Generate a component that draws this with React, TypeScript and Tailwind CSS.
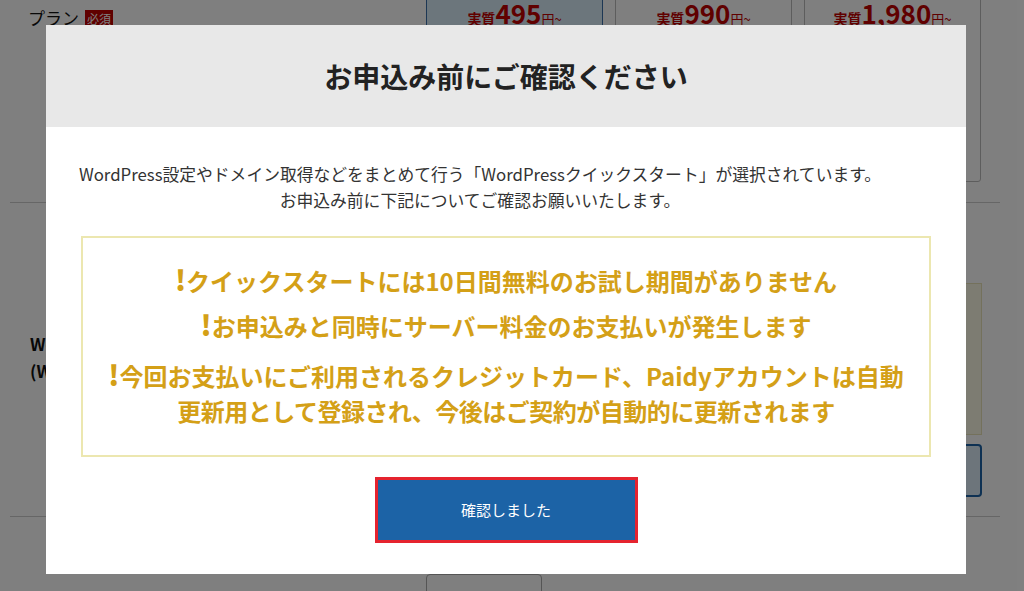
import React from "react";

const jp = { fontFamily: '"Noto Sans CJK JP", "Noto Sans", sans-serif' };

function PriceCard({ price, selected }: { price: string; selected?: boolean }) {
  return (
    <div
      className={`w-[177px] h-[206px] -mt-[24px] rounded-b-[3px] border flex flex-col items-center pt-[4px] ${
        selected ? "bg-[#d8ecf8] border-[#3a6fa8]" : "bg-white border-[#bbbbbb]"
      }`}
    >
      <div className="text-[13px] leading-[16px] text-[#c00000] font-bold tracking-[2px]">キャンペーン中</div>
      <div className="flex items-baseline mt-[2px] text-[#c00000] font-bold">
        <span className="text-[14px]">実質</span>
        <span className="text-[26px] leading-[28px]">{price}</span>
        <span className="text-[13px] font-normal">円~</span>
      </div>
    </div>
  );
}

export default function App() {
  return (
    <div className="relative w-[1024px] h-[591px] overflow-hidden bg-white text-[#333]" style={jp}>
      {/* underlying page */}
      <div className="flex flex-col">
        <div className="flex h-[202px]">
          <div className="w-[426px] pl-[28px] pt-[7px] flex items-start gap-[6px]">
            <span className="text-[17px] leading-[22px] text-[#111]">プラン</span>
            <span className="bg-[#c00000] text-white text-[12px] leading-[18px] px-[2px] mt-[3px]">必須</span>
          </div>
          <div className="flex gap-[12px]">
            <PriceCard price="495" selected />
            <PriceCard price="990" />
            <PriceCard price="1,980" />
          </div>
        </div>
        <div className="mx-[10px] w-[990px] h-px bg-[#cccccc]" />
        <div className="flex h-[313px]">
          <div className="w-[426px] pl-[30px] pt-[127px] text-[17px] leading-[27px] font-bold text-[#111]">
            <div>WordPress</div>
            <div>(WordPress)</div>
          </div>
          <div className="flex flex-col pt-[80px]">
            <div className="w-[556px] h-[152px] bg-[#fbf8e4] border border-[#e8e2b8]" />
            <div className="w-[556px] h-[53px] mt-[9px] bg-[#dbeaf7] border-2 border-[#1c63a6] rounded-[4px]" />
          </div>
        </div>
        <div className="mx-[10px] w-[990px] h-px bg-[#cccccc]" />
        <div className="flex pt-[57px] pl-[426px]">
          <div className="w-[116px] h-[30px] border border-[#aaaaaa] rounded-[4px] bg-white" />
        </div>
      </div>

      {/* overlay */}
      <div className="absolute inset-0 bg-black/50" />

      {/* modal */}
      <div className="absolute left-[46px] top-[25px] w-[920px] h-[549px] bg-white flex flex-col">
        <div className="h-[102px] bg-[#e8e8e8] flex items-center justify-center">
          <h1 className="text-[28px] font-bold text-[#222]">お申込み前にご確認ください</h1>
        </div>
        <div className="flex flex-col items-center pt-[34px]">
          <p className="text-[16.8px] leading-[26px] text-[#333] text-center whitespace-nowrap pr-[52px]">
            WordPress設定やドメイン取得などをまとめて行う「WordPressクイックスタート」が選択されています。
            <br />
            お申込み前に下記についてご確認お願いいたします。
          </p>
          <div className="mt-[23px] w-[850px] border-2 border-[#ece7b0] pt-[24px] pb-[27px] px-[20px] flex flex-col items-center text-[#d4a017] font-bold text-[24px] leading-[35px]">
            <p className="text-center whitespace-nowrap">
              <span className="text-[28px] leading-[35px] font-black">!</span>クイックスタートには10日間無料のお試し期間がありません
            </p>
            <p className="text-center whitespace-nowrap mt-[9px]">
              <span className="text-[28px] leading-[35px] font-black">!</span>お申込みと同時にサーバー料金のお支払いが発生します
            </p>
            <p className="text-center whitespace-nowrap mt-[14px]">
              <span className="text-[28px] leading-[35px] font-black">!</span>今回お支払いにご利用されるクレジットカード、Paidyアカウントは自動
              <br />
              <span className="tracking-[-0.5px]">更新用として登録され、今後はご契約が自動的に更新されます</span>
            </p>
          </div>
          <div className="mt-[20px] w-[263px] h-[66px] border-[3px] border-[#e5232f] bg-[#1c63a6] flex items-center justify-center">
            <span className="text-white text-[15px]">確認しました</span>
          </div>
        </div>
      </div>
    </div>
  );
}
